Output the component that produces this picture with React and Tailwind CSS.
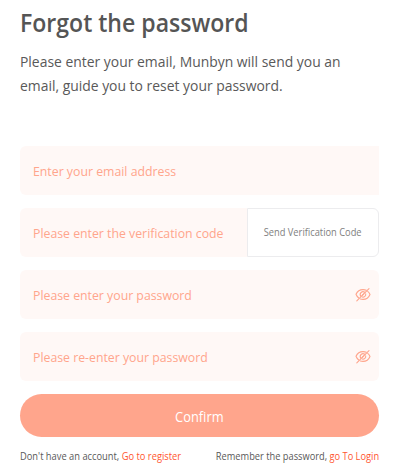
function EyeOff() {
  return (
    <svg
      className="h-[14px] w-[16px] shrink-0"
      viewBox="0 0 16 14"
      fill="none"
      stroke="#ffa58c"
      strokeWidth="1.1"
      strokeLinecap="round"
    >
      <path d="M11.300 2.300C10.300 1.800 9.200 1.600 8 1.600 4.800 1.600 2.300 3.400 1 6.300c.6 1.500 1.400 2.600 2.500 3.500M5.400 11c.8.300 1.700.4 2.600.4 3.200 0 5.700-1.800 7-4.900-.5-1.300-1.300-2.300-2.300-3.100" />
      <path d="M9.700 4.300A2.800 2.800 0 0 0 5.700 8.100M7.200 9A2.800 2.800 0 0 0 10.700 5.800M7.200 7.300l1.500-1.500" />
      <path d="M14 0.600 1.800 12.800" />
    </svg>
  );
}

function Field({ label, className = "", children }) {
  return (
    <div className={`flex h-[49px] items-center justify-between bg-[#fff8f6] pl-[13px] pr-2 ${className}`}>
      <span className="origin-left scale-x-[0.91] whitespace-nowrap pt-px text-[13.5px] leading-5 text-[#ffa58c]">
        {label}
      </span>
      {children}
    </div>
  );
}

export default function App() {
  return (
    <main className="h-[473px] w-[402px] overflow-hidden bg-white pl-5 pr-[23px] pt-1 font-['Open_Sans','Noto_Sans',sans-serif] text-[#595959]">
      <h1 className="origin-left scale-x-[0.904] whitespace-nowrap text-[25.5px] font-semibold leading-9 text-[#555]">
        Forgot the password
      </h1>
      <p className="mt-[10px] origin-left scale-x-[0.927] whitespace-nowrap text-[15px] leading-[23.5px]">
        Please enter your email, Munbyn will send you an
        <br />
        email, guide you to reset your password.
      </p>
      <form className="mt-[49px] flex flex-col gap-[13px]">
        <Field label="Enter your email address" className="rounded-l-md" />
        <div className="flex">
          <Field label="Please enter the verification code" className="w-[227px] rounded-l-md" />
          <button
            type="button"
            className="flex h-[49px] flex-1 items-center justify-center whitespace-nowrap rounded-r-md border border-[#ececee] bg-white text-[10px] text-[#808080]"
          >
            <span className="scale-x-[0.93]">Send Verification Code</span>
          </button>
        </div>
        <Field label="Please enter your password" className="rounded-md">
          <EyeOff />
        </Field>
        <Field label="Please re-enter your password" className="rounded-md">
          <EyeOff />
        </Field>
        <button
          type="button"
          className="flex h-[43px] items-center justify-center rounded-full bg-[#ffa58c] text-[14px] text-white"
        >
          <span className="scale-x-[0.92] pt-px">Confirm</span>
        </button>
      </form>
      <div className="mt-[11px] flex justify-between whitespace-nowrap text-[10px] leading-4">
        <p className="origin-left scale-x-[0.932]">
          Don't have an account, <a className="text-[#ff5630]">Go to register</a>
        </p>
        <p className="origin-right scale-x-[0.927]">
          Remember the password, <a className="text-[#ff5630]">go To Login</a>
        </p>
      </div>
    </main>
  );
}
